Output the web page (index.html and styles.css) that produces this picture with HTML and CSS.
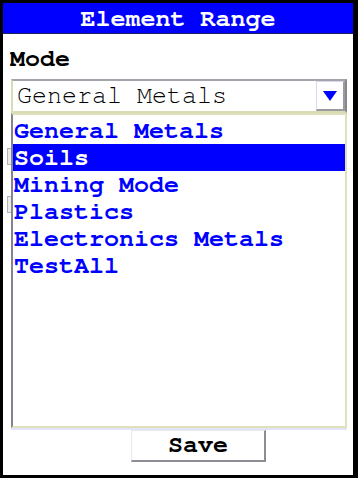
FILE: index.html
```html
<!DOCTYPE html>
<html lang="en">
<head>
  <meta charset="UTF-8">
  <meta name="viewport" content="width=device-width, initial-scale=1.0">
  <title>Element Range</title>
  <link rel="stylesheet" href="styles.css">
</head>
<body>

  <div class="panel">
    <div class="titlebar">Element Range</div>

    <div class="label">Mode</div>

    <div class="select">
      <span class="select-value">General Metals</span>
      <span class="select-btn">
        <svg width="14" height="10" viewBox="0 0 14 10"><polygon points="0,0 14,0 7,10" fill="#0000ff"/></svg>
      </span>
    </div>

    <div class="form-area">
      <!-- controls that sit under the open list -->
      <div class="field field-a"></div>
      <div class="field field-b"></div>

      <ul class="listbox">
        <li>General Metals</li>
        <li class="selected">Soils</li>
        <li>Mining Mode</li>
        <li>Plastics</li>
        <li>Electronics Metals</li>
        <li>TestAll</li>
      </ul>
    </div>

    <div class="actions">
      <button class="save">Save</button>
    </div>
  </div>

</body>
</html>
```

FILE: styles.css
```css
body {
  margin: 0;
  background: #000;
  padding: 3px 5px 3px 3px;
  font-family: "Nimbus Mono PS", "FreeMono", "Courier New", "Liberation Mono", monospace;
  font-size: 25px;
}

.panel {
  width: 350px;
  height: 472px;
  background: #fff;
  display: flex;
  flex-direction: column;
}

.titlebar {
  box-sizing: border-box;
  height: 31px;
  padding-top: 2px;
  line-height: 27px;
  background: #0000ff;
  color: #fff;
  font-weight: bold;
  text-align: center;
  border-bottom: 1px solid #20205a;
}

.label {
  font-weight: bold;
  color: #000;
  line-height: 27px;
  padding: 11px 0 0 7px;
  margin-bottom: 7px;
}

.select {
  box-sizing: border-box;
  margin-left: 8px;
  width: 336px;
  height: 34px;
  display: flex;
  align-items: center;
  border: 2px solid;
  border-color: #a4a4ac #88888c #dcdcb4 #dcdcb4;
  box-shadow: 0 1px 0 #e4e4f4;
}

.select-value {
  flex: 1;
  padding-left: 4px;
  line-height: 27px;
  color: #000;
  margin-top: -2px;
}

.select-btn {
  box-sizing: border-box;
  width: 29px;
  height: 30px;
  display: flex;
  align-items: center;
  justify-content: center;
  border: 1px solid #d8d8e8;
  border-right: 2px solid #9a9aa0;
  border-bottom: 2px solid #9a9aa0;
  background: #fff;
}

.form-area {
  position: relative;
  height: 317px;
}

.field {
  margin-left: 4px;
  width: 200px;
  height: 15px;
  border: 1px solid #b4b4b4;
  background: #ececec;
}

.field-a {
  margin-top: 35px;
}

.field-b {
  margin-top: 31px;
}

.listbox {
  position: absolute;
  top: 0;
  left: 8px;
  box-sizing: border-box;
  width: 336px;
  height: 315px;
  margin: 0;
  padding: 2px 0 0;
  list-style: none;
  background: #fff;
  border: 2px solid #e0e0bc;
  border-left: 2px solid #84848c;
  box-shadow: 0 2px 0 #e4e4f8;
}

.listbox li {
  line-height: 27px;
  padding-left: 1px;
  color: #0000ff;
  font-weight: bold;
  white-space: nowrap;
}

.listbox li.selected {
  background: #0000ff;
  color: #fff;
}

.actions {
  padding-left: 128px;
}

.save {
  box-sizing: border-box;
  width: 135px;
  height: 32px;
  padding: 0 0 2px;
  font-family: inherit;
  font-size: 25px;
  font-weight: bold;
  color: #000;
  background: #fff;
  border: 1px solid #e8e8f0;
  border-right: 2px solid #8c8c94;
  border-bottom: 2px solid #8c8c94;
}
```
